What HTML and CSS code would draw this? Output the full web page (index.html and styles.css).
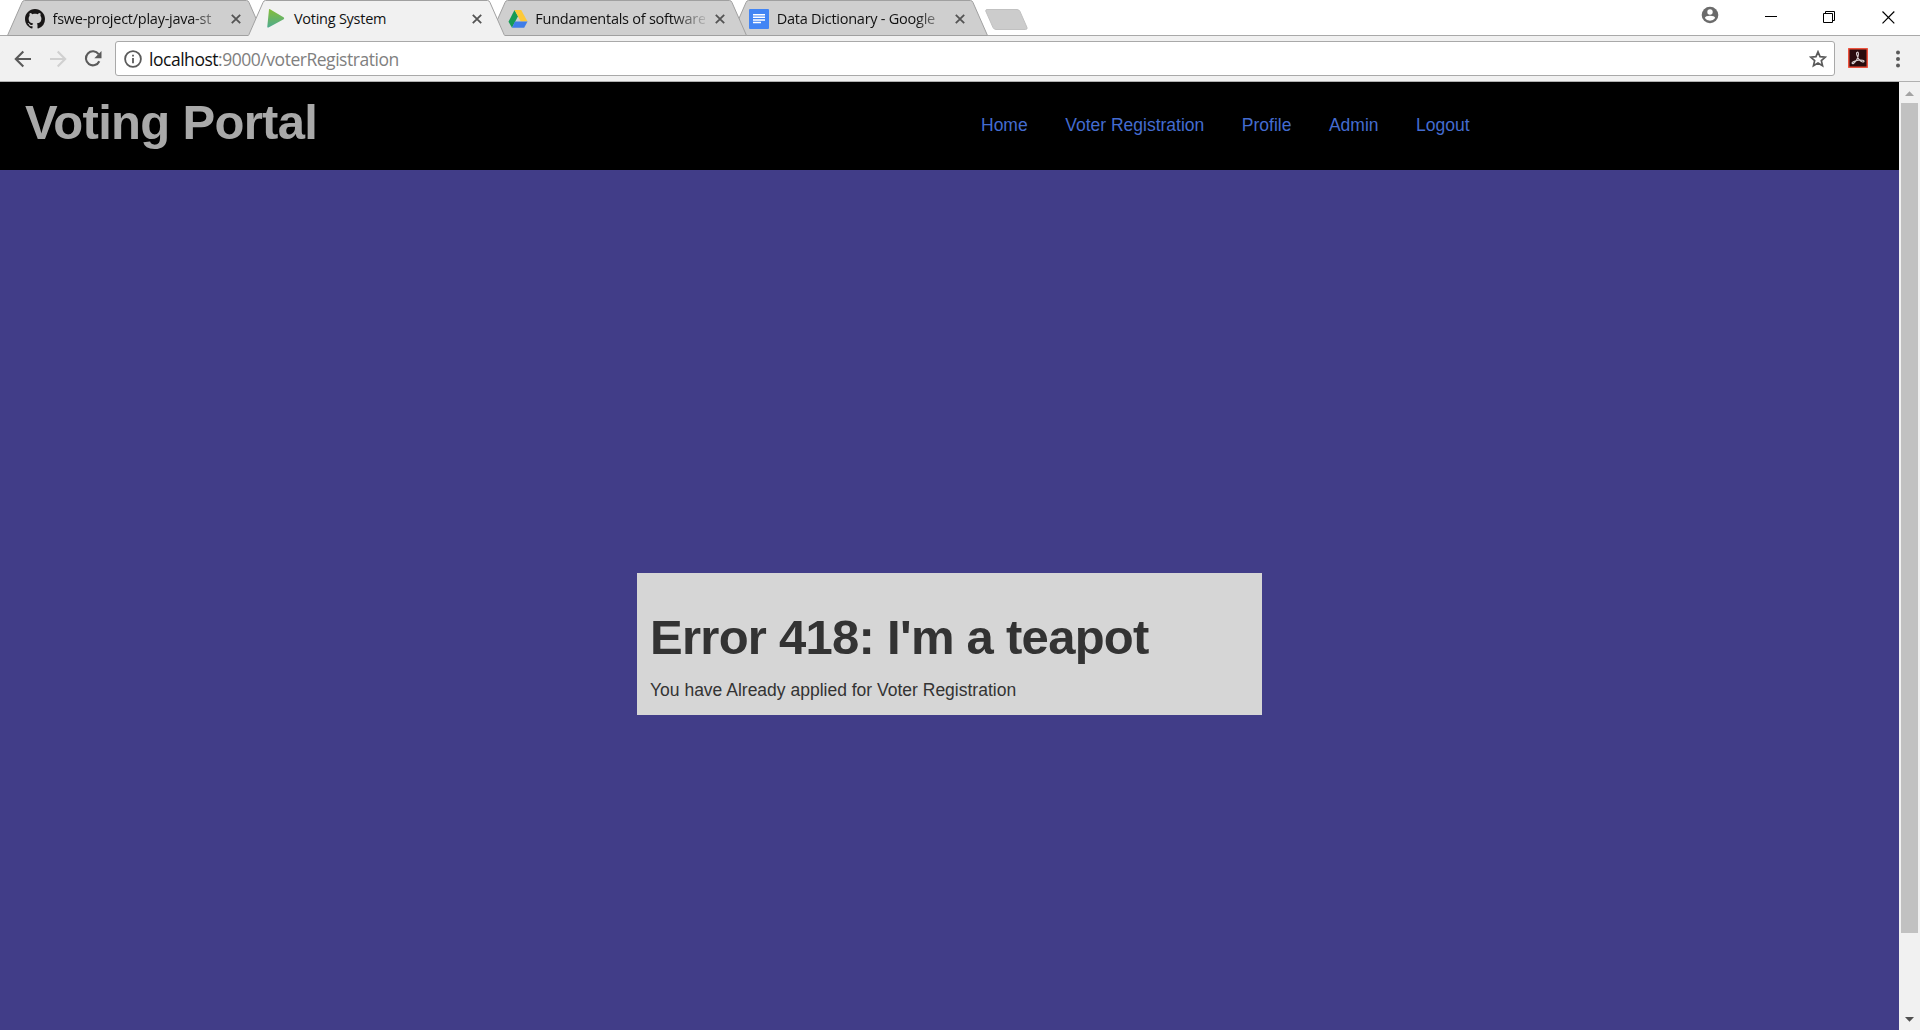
FILE: index.html
```html
<!DOCTYPE html>
<html lang="en">
<head>
<meta charset="utf-8">
<title>Voting System</title>
<link rel="stylesheet" href="styles.css">
</head>
<body>
<div class="tabstrip">
  <div class="tab tab-1">
    <svg class="tab-shape" width="257" height="36"><path d="M.5 35.5 15 2.500Q15.800.5 17.500.5H239.500Q241.200.5 242 2.500L256.500 35.500Z"/></svg>
    <svg class="fav" width="20" height="20" viewBox="0 0 16 16"><path fill="#181616" d="M8 0C3.580 0 0 3.580 0 8c0 3.540 2.290 6.530 5.470 7.590.4.070.55-.17.55-.38 0-.19-.01-.82-.01-1.490-2.010.37-2.530-.49-2.690-.94-.09-.23-.48-.94-.82-1.130-.28-.15-.68-.52-.01-.53.63-.01 1.080.58 1.230.82.72 1.210 1.870.87 2.330.66.07-.52.28-.87.51-1.070-1.780-.2-3.640-.89-3.640-3.950 0-.87.31-1.590.82-2.150-.08-.2-.36-1.020.08-2.120 0 0 .67-.21 2.200.82.64-.18 1.320-.27 2-.27s1.360.09 2 .27c1.530-1.040 2.200-.82 2.200-.82.44 1.100.16 1.920.08 2.120.51.56.82 1.270.82 2.150 0 3.070-1.870 3.750-3.650 3.950.29.25.54.73.54 1.480 0 1.070-.01 1.930-.01 2.200 0 .21.15.46.55.38A8 8 0 0 0 16 8c0-4.420-3.580-8-8-8Z"/></svg>
    <span class="tab-title fade">fswe-project/play-java-st</span>
    <svg class="close" width="10" height="10"><path d="M.8.8 9.200 9.200M9.200.8.8 9.200"/></svg>
  </div>
  <div class="tab active tab-2">
    <svg class="tab-shape" width="257" height="36"><path class="fill" d="M0 36 15 2.500Q15.800.5 17.500.5H239.500Q241.200.5 242 2.500L257 36Z"/><path class="edge" d="M.5 35.500 15 2.500Q15.800.5 17.500.5H239.500Q241.200.5 242 2.500L256.500 35.500"/></svg>
    <svg class="fav" width="20" height="20"><defs><linearGradient id="play" x1="0" y1="0" x2="0" y2="1"><stop offset="0" stop-color="#85bd37"/><stop offset="1" stop-color="#4eab8f"/></linearGradient></defs><path fill="url(#play)" d="M3 .5Q2.800-.3 4 .3L17.500 8.300Q18.700 9.200 17.700 10.300L2.500 18.400Q1.200 18.900 1.300 17.500Z"/></svg>
    <span class="tab-title">Voting System</span>
    <svg class="close" width="10" height="10"><path d="M.8.8 9.200 9.200M9.200.8.8 9.200"/></svg>
  </div>
  <div class="tab tab-3">
    <svg class="tab-shape" width="257" height="36"><path d="M.5 35.500 15 2.500Q15.800.5 17.500.5H239.500Q241.200.5 242 2.500L256.500 35.500Z"/></svg>
    <svg class="fav" width="20" height="20"><path fill="#169b55" d="M6.500 1 10 7.200 4 18.800.5 12.700Z"/><path fill="#fdc938" d="M6.500 1h6.700l6.300 11.500h-6.700Z"/><path fill="#3f7de8" d="M7 12.500h12.500L16.200 18.800H4Z"/></svg>
    <span class="tab-title fade">Fundamentals of software</span>
    <svg class="close" width="10" height="10"><path d="M.8.8 9.200 9.200M9.200.8.8 9.200"/></svg>
  </div>
  <div class="tab tab-4">
    <svg class="tab-shape" width="257" height="36"><path d="M.5 35.500 15 2.500Q15.800.5 17.500.5H239.500Q241.200.5 242 2.500L256.500 35.500Z"/></svg>
    <svg class="fav" width="20" height="20"><rect width="20" height="20" rx="1" fill="#4285f4"/><path stroke="#fff" stroke-width="1.500" d="M4 5.700h12M4 8.300h12M4 10.900h12M4 13.500h8"/></svg>
    <span class="tab-title fade">Data Dictionary - Google</span>
    <svg class="close" width="10" height="10"><path d="M.8.8 9.200 9.200M9.200.8.8 9.200"/></svg>
  </div>
  <svg class="newtab" width="43" height="22"><path fill="#ccc" stroke="#c1c1c1" d="M2 .5H32Q34 .5 35 2.500L42 18.500Q42.500 20.500 40.500 20.500H11Q9 20.500 8 18.500L.8 2.200Q.5.500 2 .5Z"/></svg>
  <div class="window-controls">
    <svg class="user" width="18" height="18"><circle cx="9" cy="9" r="8.300" fill="#6b6b6b"/><circle cx="9" cy="6" r="2.700" fill="#fff"/><path fill="#fff" d="M3.800 12Q4.500 9.700 9 9.700T14.200 12Q12.300 14.700 9 14.700T3.800 12Z"/></svg>
    <svg class="min" width="12" height="12"><path stroke="#000" d="M0 5.500h12"/></svg>
    <svg class="max" width="12" height="12" fill="none" stroke="#000"><path d="M.5 2.500h9v9h-9ZM2.500 2.500v-2h9v9h-2"/></svg>
    <svg class="quit" width="13" height="13" stroke="#000" stroke-width="1.200"><path d="M.5.5 12.300 12.300M12.300.5.5 12.300"/></svg>
  </div>
</div>
<div class="toolbar">
  <svg class="back" width="18" height="18"><path d="M17 9H2M9.300 1.500 1.800 9l7.500 7.500"/></svg>
  <svg class="forward" width="18" height="18"><path d="M1 9h15M8.700 1.500 16.200 9l-7.500 7.500"/></svg>
  <svg class="reload" width="19" height="18"><path d="M14.600 4.200A7 7 0 1 0 15.300 11.200"/><path class="head" d="M17.500 1v7.200h-7.200Z"/></svg>
  <div class="omnibox">
    <svg class="info" width="18" height="18"><circle cx="9" cy="9" r="7.900"/><path d="M9 8v5.200M9 4.700v1.900"/></svg>
    <span class="url">localhost<span class="path">:9000/voterRegistration</span></span>
    <svg class="star" width="18" height="18"><path d="m9 1.800 2.050 4.900 5.300.45-4 3.500 1.200 5.200L9 13.100l-4.550 2.750 1.200-5.200-4-3.500 5.300-.45Z"/></svg>
  </div>
  <svg class="acrobat" width="20" height="20"><rect x=".8" y=".8" width="18.400" height="18.400" fill="#280c0d" stroke="#f04832" stroke-width="1.400"/><path fill="none" stroke="#d8d0d0" stroke-width="1.100" d="M9.200 4.200C11.200 3.600 10.600 8.800 8.600 12S4.600 16.300 4.100 15.300s2.900-2.600 6.200-3.100 6 .2 5.700 1.300-3.300.4-5.100-2.200-3.300-6.700-1.700-7.100Z"/></svg>
  <svg class="more" width="4" height="18" fill="#5a5a5a"><circle cx="2" cy="2.500" r="2"/><circle cx="2" cy="9" r="2"/><circle cx="2" cy="15.400" r="2"/></svg>
</div>
<div class="viewport">
  <div class="page">
    <header class="masthead">
      <h1 class="brand">Voting Portal</h1>
      <nav class="nav"><a>Home</a><a>Voter Registration</a><a>Profile</a><a>Admin</a><a>Logout</a></nav>
    </header>
    <main class="main">
      <section class="card">
        <h1 class="card-title">Error 418: I'm a teapot</h1>
        <p class="card-text">You have Already applied for Voter Registration</p>
      </section>
    </main>
  </div>
  <div class="scrollbar">
    <svg width="21" height="21"><path fill="#a3a3a3" d="M6 14h9L10.500 9.200Z"/></svg>
    <div class="thumb"></div>
    <svg width="21" height="21"><path fill="#505050" d="M6 8h9L10.500 12.800Z"/></svg>
  </div>
</div>
</body>
</html>
```
FILE: styles.css
```css
* { box-sizing: border-box; }
html, body { height: 100%; margin: 0; }
body { display: flex; flex-direction: column; overflow: hidden; background: #fff; font-family: "Liberation Sans", Arial, sans-serif; }
svg { display: block; flex: none; }

.tabstrip { display: flex; flex: none; height: 36px; padding-left: 7px; border-bottom: 1px solid #a9a9a9; font-family: "Open Sans", "Noto Sans", sans-serif; }
.tab { position: relative; flex: none; display: flex; align-items: center; width: 257px; height: 36px; margin-right: -15.6px; padding: 2px 23px 0 18px; }
.tab-1 { z-index: 4; }
.tab-2 { z-index: 5; }
.tab-3 { z-index: 3; }
.tab-4 { z-index: 2; }
.tab-shape { position: absolute; left: 0; top: 0; z-index: -1; fill: #cfcfcf; stroke: #a0a0a0; }
.tab-shape .fill { fill: #f1f1f1; stroke: none; }
.tab-shape .edge { fill: none; }
.tab-title { width: 170px; margin-left: 7.5px; white-space: nowrap; font-size: 14.5px; letter-spacing: -.25px; line-height: 24px; color: #111; }
.fade { -webkit-mask-image: linear-gradient(90deg, #000 138px, transparent 175px); mask-image: linear-gradient(90deg, #000 138px, transparent 175px); }
.close { margin-left: 9.5px; stroke: #545454; stroke-width: 1.8; }
.newtab { margin: 9px 0 0 12.5px; }
.window-controls { display: flex; align-items: flex-start; margin-left: auto; padding-right: 25px; }
.user { margin: 6px 46px 0 0; }
.min { margin: 11px 46px 0 0; }
.max { margin: 11px 47px 0 0; }
.quit { margin-top: 11px; }

.toolbar { display: flex; align-items: center; flex: none; height: 46px; padding: 0 20px 0 14px; background: #f1f1f1; border-bottom: 1px solid #b0b0b0; }
.back, .forward, .reload { fill: none; stroke: #5a5a5a; stroke-width: 2.1; }
.forward { margin-left: 17px; stroke: #d0d0d0; }
.reload { margin-left: 17px; }
.reload .head { fill: #5a5a5a; stroke: none; }
.omnibox { display: flex; align-items: center; width: 1720px; height: 35px; margin-left: 12px; padding: 0 7px 0 8px; border: 1px solid #a9a9a9; border-radius: 3px; background: #fff; }
.info { fill: none; stroke: #5a5a5a; stroke-width: 1.8; }
.url { flex: 1; margin-left: 7px; font: 17.5px/28px "Open Sans", "Noto Sans", sans-serif; letter-spacing: -.47px; color: #111; }
.path { color: #808080; }
.star { fill: none; stroke: #5a5a5a; stroke-width: 1.7; }
.acrobat { margin: 0 0 1px 12.5px; }
.more { margin-left: auto; }

.viewport { display: flex; flex: 1; min-height: 0; }
.page { display: flex; flex-direction: column; flex: 1; background: #413d88; }
.masthead { display: flex; flex: none; height: 88px; padding-left: 25px; background: #000; }
.brand { width: 956px; margin: 12px 0 0; font-size: 49px; letter-spacing: -.7px; line-height: 56px; color: #a9a9a9; }
.nav { display: flex; gap: 37.5px; margin-top: 31px; font-size: 17.5px; line-height: 24px; color: #446cd0; }
.main { display: flex; flex: 1; justify-content: center; padding-top: 403px; }
.card { width: 625px; height: 142px; padding: 0 13px; background: #d6d6d6; color: #333; }
.card-title { margin: 36px 0 0; font-size: 49px; letter-spacing: -.73px; line-height: 56px; }
.card-text { margin: 13px 0 0; font-size: 17.5px; line-height: 24px; }

.scrollbar { display: flex; flex-direction: column; width: 21px; background: #f1f1f1; }
.thumb { width: 17px; height: 830px; margin: 0 0 auto 2px; background: #c1c1c1; }
```
